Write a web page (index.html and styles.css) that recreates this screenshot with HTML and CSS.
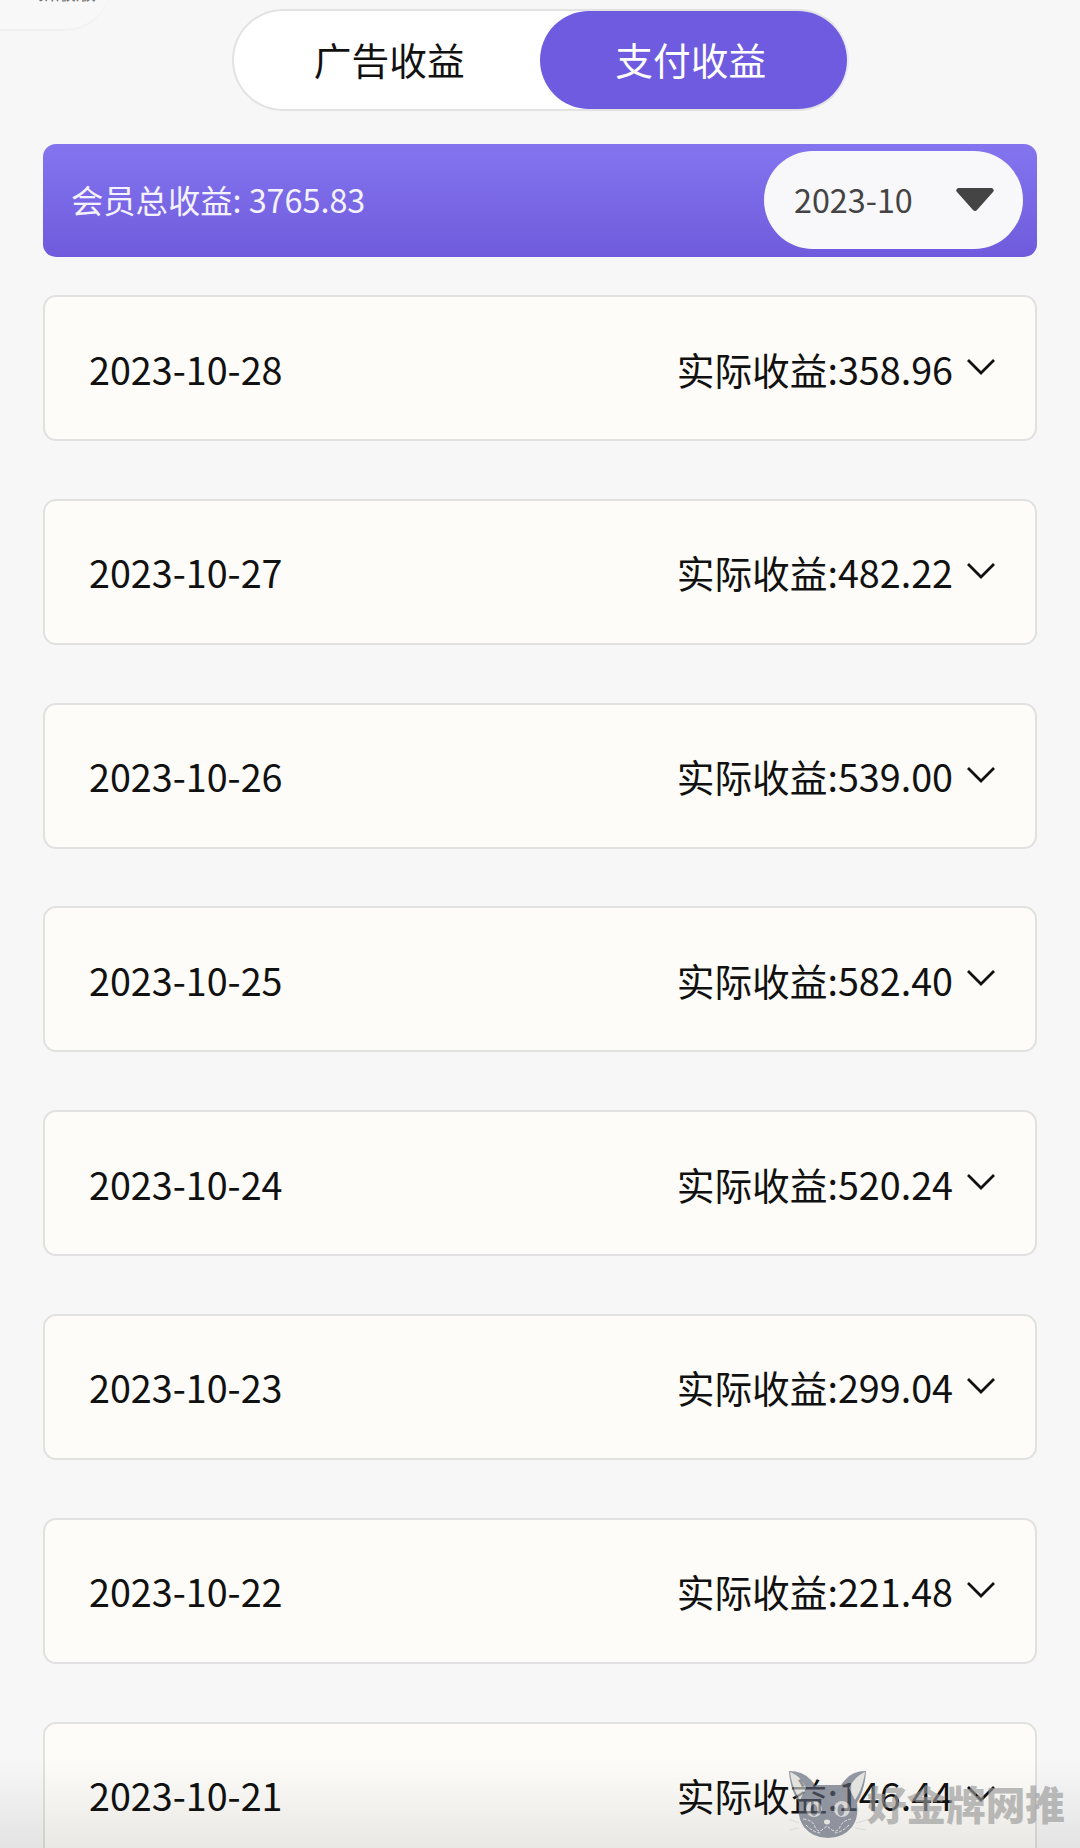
FILE: index.html
```html
<!DOCTYPE html>
<html lang="zh-CN">

<head>
    <meta charset="UTF-8">
    <meta name="viewport" content="width=device-width, initial-scale=1.0">
    <title>支付收益</title>
    <link rel="stylesheet" href="styles.css">
</head>

<body>
    <div class="corner-tip"><span>新版版</span></div>

    <nav class="tabs">
        <button class="tab">广告收益</button>
        <button class="tab active">支付收益</button>
    </nav>

    <section class="summary">
        <span class="total">会员总收益: 3765.83</span>
        <button class="month">
            <span>2023-10</span>
            <svg width="38" height="24" viewBox="0 0 38 24">
                <path d="M2 0h34q3 2 1 4L21 22q-2 2-4 0L1 4Q-1 2 2 0z" fill="#444" />
            </svg>
        </button>
    </section>

    <main class="list" id="list"></main>

    <div class="bottom-fade"></div>

    <div class="watermark">
        <svg class="cat" width="78" height="68" viewBox="0 0 78 68">
            <path d="M0 0q14 0 22 9l4 5h26l4-5Q63 0 77 0q-1 18-9 32 2 15-5 24-9 11-24 11t-24-11Q8 47 10 32 1 18 0 0z" fill="#5c6375" />
            <path d="M1 1q11 4 16 16l-6 12Q3 17 1 1zM76 1Q66 5 60 17l6 12q8-12 10-28z" fill="#d8d8d4" />
            <ellipse cx="25" cy="38" rx="8" ry="8" fill="#c9cacc" />
            <ellipse cx="53" cy="38" rx="8" ry="8" fill="#c9cacc" />
            <ellipse cx="25" cy="39" rx="3.5" ry="6" fill="#5c6375" />
            <ellipse cx="52" cy="39" rx="3.5" ry="6" fill="#5c6375" />
            <ellipse cx="38" cy="51" rx="3" ry="2.4" fill="#ddd" />
            <path d="M14 48q10 1 12 8 3 6 7 3l5-4 5 4q5 3 8-3 2-6 11-8M17 54q8 8 15 8M60 54q-8 8-15 8" fill="none" stroke="#ddd" stroke-dasharray="3 1.5" />
            <path d="M10 52l-11-4M10 57l-10 2M67 52l11-3M66 57l11 2" fill="none" stroke="#d2d2d2" />
        </svg>
        <span>好金牌网推</span>
    </div>

    <script>
        const records = [
            ['2023-10-28', '358.96'],
            ['2023-10-27', '482.22'],
            ['2023-10-26', '539.00'],
            ['2023-10-25', '582.40'],
            ['2023-10-24', '520.24'],
            ['2023-10-23', '299.04'],
            ['2023-10-22', '221.48'],
            ['2023-10-21', '146.44']
        ];

        document.getElementById('list').innerHTML = records.map(([date, amount]) => `
            <div class="card">
                <span>${date}</span>
                <div class="amount">
                    <span>实际收益:${amount}</span>
                    <svg class="arrow" width="30" height="18" viewBox="0 0 30 18">
                        <path d="M2 2l13 13L28 2" />
                    </svg>
                </div>
            </div>`).join('');
    </script>
</body>

</html>
```
FILE: styles.css
```css
* {
    margin: 0;
    padding: 0;
    box-sizing: border-box;
}

body {
    position: relative;
    height: 1848px;
    padding: 9px 43px 0;
    overflow: hidden;
    background-color: #f7f7f7;
    color: #111;
    font-family: "Noto Sans CJK SC", sans-serif;
    font-size: 37.7px;
}

button {
    border: none;
    background: none;
    color: inherit;
    font: inherit;
}

.corner-tip {
    position: absolute;
    left: -40px;
    top: -60px;
    width: 150px;
    height: 91px;
    border-bottom: 2px solid #f1f1f1;
    border-radius: 0 0 45px 0;
    background: #f8f8f8;
}

.corner-tip span {
    position: absolute;
    left: 76px;
    bottom: 27px;
    font-size: 20px;
    line-height: 1;
    color: #777;
}

.tabs {
    display: flex;
    width: 617px;
    height: 102px;
    margin: 0 auto;
    border: 2px solid #e2e2e2;
    border-right-color: #ebe8fb;
    border-radius: 51px;
    background: #fff;
}

.tab {
    flex: 1;
    padding: 0 0 3px 5px;
    border-radius: 50px;
}

.tab.active {
    padding: 0 5px 3px 0;
    background: #6f5be0;
    color: #fff;
}

.summary {
    display: flex;
    align-items: center;
    justify-content: space-between;
    height: 113px;
    margin-top: 33px;
    padding: 0 14px 2px 28px;
    border-radius: 13px;
    background: linear-gradient(#8475ef, #6f5bdc);
    color: #f4f2ff;
    font-size: 32.3px;
}

.month {
    display: flex;
    align-items: center;
    justify-content: space-between;
    width: 259px;
    height: 98px;
    padding: 0 29px 0 30px;
    border-radius: 49px;
    background: #f8f8fa;
    color: #444;
}

.total,
.month span {
    padding-bottom: 2px;
}

.list {
    display: flex;
    flex-direction: column;
    gap: 57.8px;
    margin-top: 38px;
}

.card {
    display: flex;
    align-items: center;
    justify-content: space-between;
    height: 146px;
    padding: 0 39px 0 44px;
    border: 2px solid #e1e1e1;
    border-radius: 13px;
    background: #fdfcf8;
}

.amount {
    display: flex;
    align-items: center;
    gap: 13px;
}

.arrow {
    margin-top: -2px;
    fill: none;
    stroke: #111;
    stroke-width: 2.8;
}

.bottom-fade {
    position: absolute;
    left: 0;
    right: 0;
    bottom: 0;
    height: 90px;
    background: linear-gradient(rgba(0, 0, 0, 0), rgba(0, 0, 0, 0.08));
}

.watermark {
    position: absolute;
    left: 789px;
    top: 1771px;
    display: flex;
    align-items: flex-start;
    opacity: 0.65;
}

.watermark span {
    margin-top: 12px;
    font-size: 39.6px;
    font-weight: 900;
    line-height: 1;
    color: #9a9a9a;
}
```
